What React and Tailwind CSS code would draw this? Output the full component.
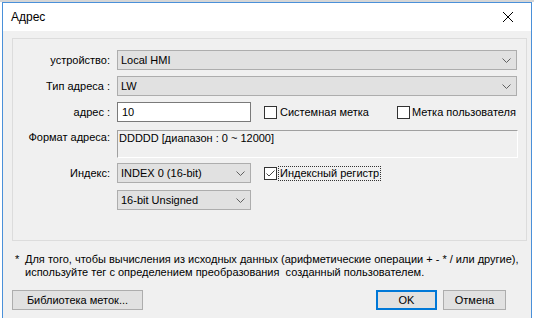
import React from 'react';

const Chevron = () => (
  <svg width="9" height="5" viewBox="0 0 9 5" className="shrink-0">
    <path d="M0.5 0.5 L4.5 4.5 L8.5 0.5" fill="none" stroke="#606060" strokeWidth="1" />
  </svg>
);

const Select = ({ value, width }) => (
  <div
    className={`${width} h-[20px] bg-[#e1e1e1] border border-[#adadad] flex items-center justify-between pl-[3px] pr-[5px]`}
  >
    <span>{value}</span>
    <Chevron />
  </div>
);

const Checkbox = ({ checked }) => (
  <div className="w-[13px] h-[13px] border border-[#333333] bg-white flex items-center justify-center shrink-0">
    {checked && (
      <svg width="11" height="11" viewBox="0 0 11 11">
        <path d="M1.5 5.5 L4 8 L9.5 2.5" fill="none" stroke="#444444" strokeWidth="1" />
      </svg>
    )}
  </div>
);

const Label = ({ children, top }) => (
  <div className={`w-[97px] text-right shrink-0 ${top ? 'self-start pt-[1px]' : ''}`}>{children}</div>
);

const App = () => {
  return (
    <div className="w-[534px] h-[318px] bg-white overflow-hidden font-['Liberation_Sans',sans-serif] text-[11px] text-black leading-[13px]">
      <div className="h-[2px] bg-[#d6d6d6]" />
      <div className="mx-[2px] h-[316px] border-x border-t border-[#4a90d9] flex flex-col">
        {/* Title bar */}
        <div className="h-[28px] bg-white flex items-center justify-between pl-[8px] pr-[18px] shrink-0">
          <span className="text-[12px]">Адрес</span>
          <svg width="10" height="10" viewBox="0 0 10 10">
            <path d="M0 0 L10 10 M10 0 L0 10" stroke="#000" strokeWidth="1" />
          </svg>
        </div>

        {/* Body */}
        <div className="flex-1 bg-[#f0f0f0] flex flex-col">
          {/* Group box */}
          <div className="mt-[7px] ml-[9px] mr-[4px] h-[203px] border border-[#dcdcdc] pt-[11px] flex flex-col">
            <div className="flex items-center gap-[7px]">
              <Label>устройство:</Label>
              <Select value="Local HMI" width="w-[400px]" />
            </div>
            <div className="flex items-center gap-[7px] mt-[6px]">
              <Label>Тип адреса :</Label>
              <Select value="LW" width="w-[400px]" />
            </div>
            <div className="flex items-center gap-[7px] mt-[6px]">
              <Label>адрес :</Label>
              <div className="w-[134px] h-[20px] bg-white border border-[#7a7a7a] flex items-center pl-[4px]">10</div>
              <div className="w-[133px] flex items-center gap-[3px] ml-[6px]">
                <Checkbox />
                <span>Системная метка</span>
              </div>
              <div className="flex items-center gap-[2px] -ml-[7px]">
                <Checkbox />
                <span className="whitespace-nowrap">Метка пользователя</span>
              </div>
            </div>
            <div className="flex items-center gap-[7px] mt-[8px]">
              <Label top>Формат адреса:</Label>
              <div className="w-[401px] h-[28px] border-t border-l border-[#a0a0a0] border-b-white border-r-white border-b border-r pl-[1px] pt-[1px]">
                DDDDD [диапазон : 0 ~ 12000]
              </div>
            </div>
            <div className="flex items-center gap-[7px] mt-[5px]">
              <Label>Индекс:</Label>
              <Select value="INDEX 0 (16-bit)" width="w-[134px]" />
              <div className="flex items-center gap-[1px] ml-[6px]">
                <Checkbox checked />
                <span className="border border-dotted border-[#333333] px-[1px] py-[0px]">Индексный регистр</span>
              </div>
            </div>
            <div className="flex items-center gap-[7px] mt-[7px]">
              <div className="w-[97px] shrink-0" />
              <Select value="16-bit Unsigned" width="w-[134px]" />
            </div>
          </div>

          {/* Note */}
          <div className="mt-[12px] ml-[12px] flex">
            <span className="w-[10px] shrink-0">*</span>
            <div>
              <div>Для того, чтобы вычисления из исходных данных (арифметические операции + - * / или другие),</div>
              <div>используйте тег с определением преобразования&nbsp; созданный пользователем.</div>
            </div>
          </div>

          {/* Buttons */}
          <div className="mt-[11px] ml-[9px] mr-[25px] flex items-center">
            <div className="w-[131px] h-[20px] bg-[#e1e1e1] border border-[#adadad] flex items-center justify-center">
              Библиотека меток...
            </div>
            <div className="flex-1" />
            <div className="w-[61px] h-[20px] bg-[#e1e1e1] border-2 border-[#0078d7] flex items-center justify-center">
              OK
            </div>
            <div className="w-[63px] h-[20px] ml-[6px] bg-[#e1e1e1] border border-[#adadad] flex items-center justify-center">
              Отмена
            </div>
          </div>
        </div>
      </div>
    </div>
  );
};

export default App;
